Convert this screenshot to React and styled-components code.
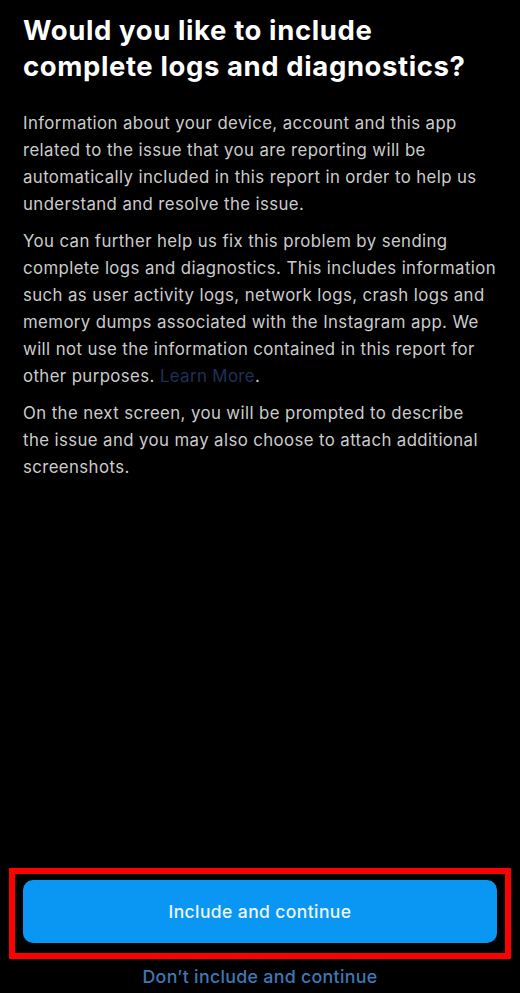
import React from "react";
import styled, { createGlobalStyle } from "styled-components";

const Global = createGlobalStyle`
  html, body { margin: 0; padding: 0; background: #000; }
  body { font-family: Inter, "Noto Sans", sans-serif; -webkit-font-smoothing: antialiased; }
  * { box-sizing: border-box; }
`;

const Screen = styled.div`
  width: 520px;
  height: 993px;
  background: #000;
  display: flex;
  flex-direction: column;
  justify-content: space-between;
  overflow: hidden;
`;

const Content = styled.div`
  padding: 12px 23px 0 23px;
  display: flex;
  flex-direction: column;
`;

const Title = styled.h1`
  margin: 0 0 26px 0;
  font-size: 27.5px;
  line-height: 36px;
  font-weight: 700;
  color: #ffffff;
  letter-spacing: 0.6px;
`;

const Para = styled.p`
  margin: 0 0 10px 0;
  font-size: 16.8px;
  line-height: 27px;
  font-weight: 400;
  color: #cccccc;
  letter-spacing: 0.4px;
`;

const Link = styled.a`
  color: #1f3158;
  text-decoration: none;
`;

const Footer = styled.div`
  display: flex;
  flex-direction: column;
  align-items: center;
  padding: 0 9px 5px 9px;
  gap: 7px;
`;

const Highlight = styled.div`
  width: 100%;
  border: 6px solid #ff0000;
  padding: 6px 8px 10px 8px;
`;

const PrimaryButton = styled.button`
  width: 100%;
  height: 63px;
  border: none;
  border-radius: 10px;
  background: #0a96f3;
  color: #eef7ff;
  font-family: Inter, "Noto Sans", sans-serif;
  font-size: 17.5px;
  font-weight: 500;
  letter-spacing: 0.4px;
  display: flex;
  align-items: center;
  justify-content: center;
  cursor: pointer;
`;

const SecondaryButton = styled.button`
  background: none;
  border: none;
  padding: 0;
  height: 22px;
  line-height: 22px;
  font-family: Inter, "Noto Sans", sans-serif;
  font-size: 17.8px;
  font-weight: 500;
  letter-spacing: 0.3px;
  color: #3f78b4;
  cursor: pointer;
`;

export default function App() {
  return (
    <>
      <Global />
      <Screen>
        <Content>
          <Title>
            Would you like to include
            <br />
            complete logs and diagnostics?
          </Title>
          <Para>
            Information about your device, account and this app
            <br />
            related to the issue that you are reporting will be
            <br />
            automatically included in this report in order to help us
            <br />
            understand and resolve the issue.
          </Para>
          <Para>
            You can further help us fix this problem by sending
            <br />
            complete logs and diagnostics. This includes information
            <br />
            such as user activity logs, network logs, crash logs and
            <br />
            memory dumps associated with the Instagram app. We
            <br />
            will not use the information contained in this report for
            <br />
            other purposes. <Link href="#">Learn More</Link>.
          </Para>
          <Para>
            On the next screen, you will be prompted to describe
            <br />
            the issue and you may also choose to attach additional
            <br />
            screenshots.
          </Para>
        </Content>
        <Footer>
          <Highlight>
            <PrimaryButton>Include and continue</PrimaryButton>
          </Highlight>
          <SecondaryButton>Don’t include and continue</SecondaryButton>
        </Footer>
      </Screen>
    </>
  );
}
